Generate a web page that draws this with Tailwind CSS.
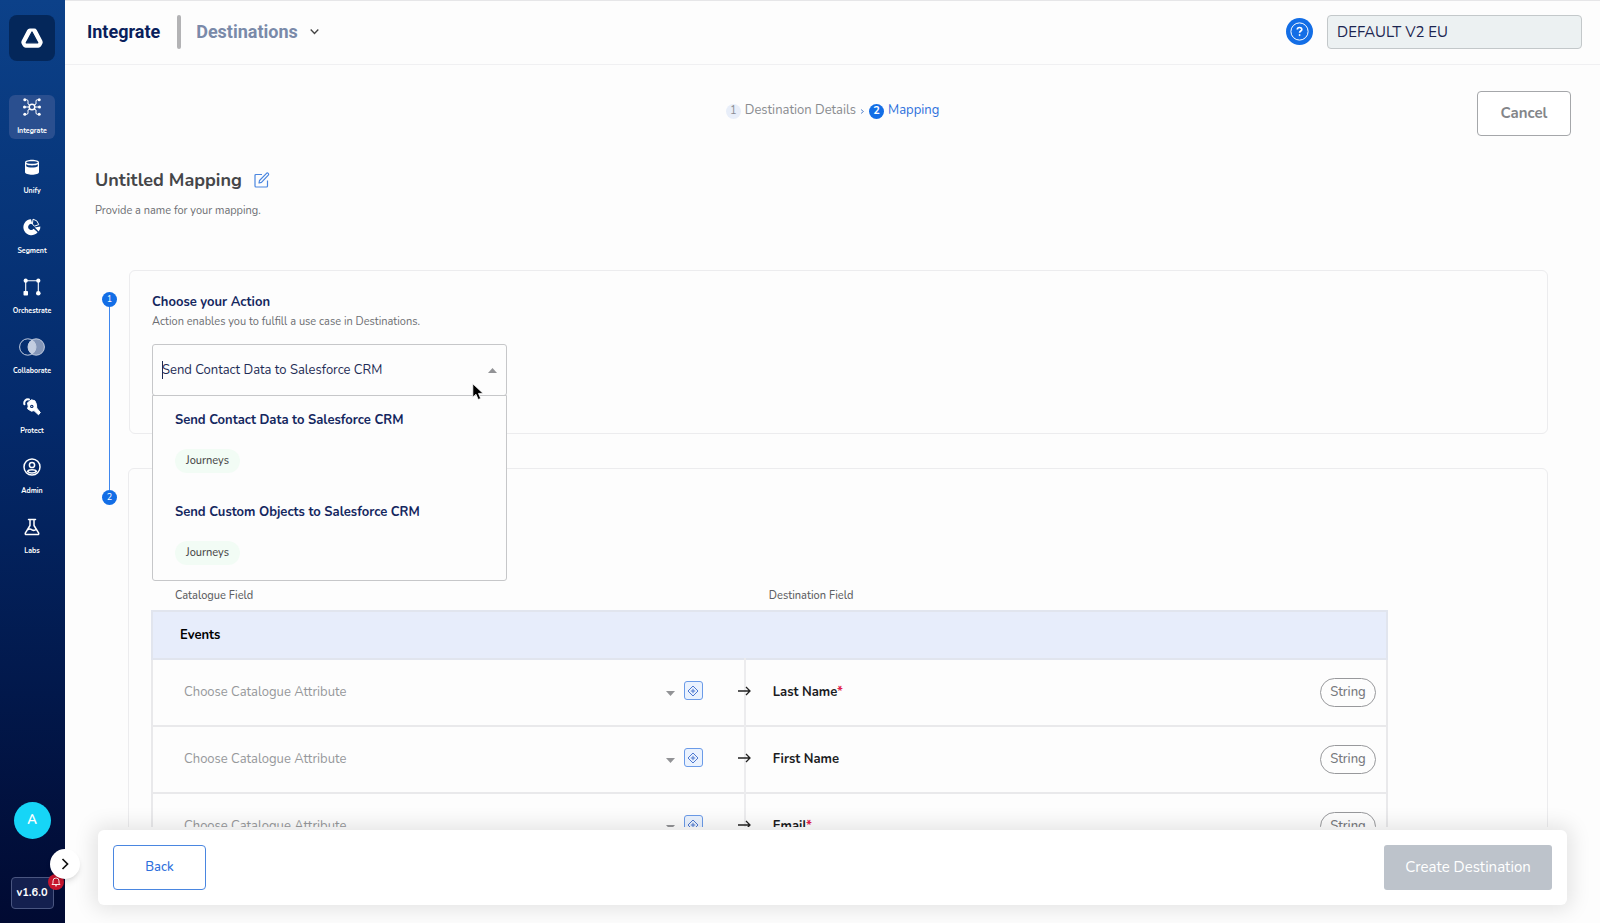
<!DOCTYPE html>
<html lang="en">
<head>
    <meta charset="UTF-8">
    <meta name="viewport" content="width=device-width, initial-scale=1.0">
    <title>Integrate - Destinations</title>
    <script src="https://cdn.jsdelivr.net/npm/@tailwindcss/browser@4"></script>
</head>
<body class="flex h-screen overflow-hidden bg-[#fdfdfd] font-['Nunito','Lato',sans-serif] text-[#4a4a4a]">

    <!-- Sidebar -->
    <aside class="relative z-20 flex w-[65px] shrink-0 flex-col items-center bg-linear-to-b from-[#0c4189] via-[#042a6b] via-45% to-[#010a32] pt-[15px] pr-px pb-[14px] text-white">
        <a href="#" aria-label="Home" class="mb-[34px] flex size-[46px] items-center justify-center rounded-lg bg-[#04275a]">
            <svg class="size-6" viewBox="0 0 24 24" fill="none">
                <path d="M9.800 3.200h4.400q1.300 0 1.900 1.100l5.600 10.700q.6 1.200 0 2.300l-1.400 2.500q-.7 1.100-2 1.100H5.700q-1.300 0-2-1.100l-1.400-2.500q-.6-1.100 0-2.300L7.900 4.300q.6-1.100 1.900-1.100Z" fill="white" stroke="white" stroke-width="1.500" stroke-linejoin="round"/>
                <path d="M12 6l5.800 10.800H6.200Z" fill="#04275a" stroke="#04275a" stroke-width="1.200" stroke-linejoin="round"/>
            </svg>
        </a>
        <nav class="flex flex-col gap-4 text-[7px] leading-[10px] font-bold">
            <a href="#" class="flex h-[44px] w-[46px] flex-col items-center gap-[10px] rounded-md bg-[#2a4f8f] pt-[3px]">
                <svg class="size-[18px]" viewBox="0 0 18 18" fill="none" stroke="white" stroke-width="1">
                    <circle cx="9" cy="9" r="2.8" stroke-width="1.5"/>
                    <path d="M1.5 9h4.7M11.8 9h4.7M2 1.700h1.600q1.400 0 1.400 1.400V6l2 1.200M2 16.300h1.600q1.400 0 1.400-1.400V12l2-1.200M16 1.700h-1.600q-1.400 0-1.400 1.400V6l-2 1.200M16 16.300h-1.600q-1.400 0-1.400-1.400V12l-2-1.200"/>
                    <g fill="white" stroke="none"><circle cx="1.8" cy="1.8" r="1.5"/><circle cx="1.5" cy="9" r="1.5"/><circle cx="1.8" cy="16.2" r="1.5"/><circle cx="16.2" cy="1.8" r="1.5"/><circle cx="16.5" cy="9" r="1.5"/><circle cx="16.2" cy="16.2" r="1.5"/></g>
                </svg>
                Integrate
            </a>
            <a href="#" class="flex h-[44px] w-[46px] flex-col items-center gap-[10px] pt-[3px]">
                <svg class="size-[18px]" viewBox="0 0 18 18">
                    <path d="M2 4.500C2 .9 16 .9 16 4.500V14c0 3.600-14 3.600-14 0Z" fill="white"/>
                    <path d="M3.200 4.500c0 1.700 11.600 1.700 11.600 0s-11.600-1.700-11.600 0M3.200 6.200v2c1.500 1.800 10.100 1.800 11.600 0v-2c-2 1.600-9.600 1.600-11.600 0" fill="#0a3a80"/>
                </svg>
                Unify
            </a>
            <a href="#" class="flex h-[44px] w-[46px] flex-col items-center gap-[10px] pt-[3px]">
                <svg class="size-[18px]" viewBox="0 0 18 18">
                    <path d="M8 1.200A8 8 0 1 0 14.600 14.200L10.600 10.800A3 3 0 1 1 9.400 6.200Z" fill="white"/>
                    <path d="M10 1.200a7 7 0 0 1 5.800 5.400l-4.400 1.600-2-2.200Z" fill="none" stroke="white" stroke-width="1"/>
                    <path d="M11.800 9.600l5.600-1.200q.2 3-1.800 5.200Z" fill="white"/>
                </svg>
                Segment
            </a>
            <a href="#" class="flex h-[44px] w-[46px] flex-col items-center gap-[10px] pt-[3px]">
                <svg class="size-[18px]" viewBox="0 0 18 18" fill="white">
                    <path d="M2.700 15V2.700h12.600V15" fill="none" stroke="white" stroke-width="1.1"/>
                    <circle cx="2.700" cy="2.700" r="2.100"/><circle cx="15.300" cy="2.700" r="2.100"/><rect x=".5" y="13" width="4.500" height="4.500" rx=".8"/><circle cx="15.300" cy="15.300" r="2.300"/>
                </svg>
                Orchestrate
            </a>
            <a href="#" class="flex h-[44px] w-[46px] flex-col items-center gap-[10px] pt-[3px]">
                <svg class="h-[18px] w-[26px]" viewBox="0 0 26 18">
                    <circle cx="17.2" cy="9" r="8.2" fill="#8496b8"/>
                    <path d="M13 2a8.200 8.200 0 0 1 0 14 8.200 8.200 0 0 1 0-14" fill="#c3cde0"/>
                    <circle cx="8.800" cy="9" r="8.200" fill="none" stroke="#c3cde0" stroke-width="1"/>
                    <circle cx="17.200" cy="9" r="8.200" fill="none" stroke="#c3cde0" stroke-width="1"/>
                </svg>
                Collaborate
            </a>
            <a href="#" class="flex h-[44px] w-[46px] flex-col items-center gap-[10px] pt-[3px]">
                <svg class="size-[18px]" viewBox="0 0 18 18">
                    <path d="M1.400 6.300C.6 3 3 .9 6 1.400" fill="none" stroke="white" stroke-width="2" stroke-linecap="round"/>
                    <path d="M4.500 4.800l4-3 3.400 1 1.600 3.600.2 3.600 3.600 4.500-1.800 2.300-4.500-4.200-2.600.6-3.800-2.400.6-2.400Z" fill="white" stroke="white" stroke-linejoin="round"/>
                    <circle cx="8.800" cy="8.400" r="1.700" fill="#05296a"/>
                    <circle cx="8.800" cy="8.400" r=".6" fill="white"/>
                </svg>
                Protect
            </a>
            <a href="#" class="flex h-[44px] w-[46px] flex-col items-center gap-[10px] pt-[3px]">
                <svg class="size-[18px]" viewBox="0 0 18 18" fill="none" stroke="white" stroke-width="1.5">
                    <circle cx="9" cy="9" r="8"/><circle cx="9" cy="7" r="2.600"/><path d="M4.600 13.500c.8-2.400 8-2.400 8.800 0-2 2-6.800 2-8.800 0Z"/>
                </svg>
                Admin
            </a>
            <a href="#" class="flex h-[44px] w-[46px] flex-col items-center gap-[10px] pt-[3px]">
                <svg class="size-[18px]" viewBox="0 0 18 18" fill="none" stroke="white" stroke-width="1.500" stroke-linecap="round" stroke-linejoin="round">
                    <path d="M5.500 1.500h7M7 1.500v6L2.300 15.200q-.3 1.300 1 1.300h11.400q1.300 0 1-1.300L11 7.500v-6M5 11.500q2-1 4 .3t4-.3"/>
                </svg>
                Labs
            </a>
        </nav>
        <div class="mt-auto mb-[38px] flex size-[37px] items-center justify-center rounded-full bg-[#16d5f7] text-[13px] font-bold">A</div>
        <button class="relative flex h-8 w-[43px] items-center justify-center rounded-sm border border-[#4a5680] bg-[#14204f] text-[11px] font-bold">
            v1.6.0
            <span class="absolute -top-[4px] -right-[11px] flex size-4 items-center justify-center rounded-full bg-[#c8152e]">
                <svg class="size-[10px]" viewBox="0 0 10 10" fill="none" stroke="white" stroke-width=".9"><path d="M1 7.500h8L8 6.200V4a3 3 0 0 0-6 0v2.200ZM4 8.800h2"/></svg>
            </span>
        </button>
        <button aria-label="Expand menu" class="absolute right-[-15px] bottom-[44px] flex size-[30px] items-center justify-center rounded-full bg-white shadow-md">
            <svg class="size-3" viewBox="0 0 12 12" fill="none" stroke="#111" stroke-width="1.7"><path d="M3.500 1l5 5-5 5"/></svg>
        </button>
    </aside>

    <div class="flex min-w-0 flex-1 flex-col">
        <header class="flex h-[65px] shrink-0 items-center border-t border-b border-t-[#e6e6e8] border-b-[#f0f0f2] pr-[18px] pb-[2px] pl-[22px]">
            <h1 class="font-['Roboto',sans-serif] text-lg font-bold text-[#0a1f5c]">Integrate</h1>
            <span class="mr-[15px] ml-[17px] h-[34px] w-1 rounded-full bg-[#b3b3b5]"></span>
            <button class="flex items-center gap-3 font-['Roboto',sans-serif] text-lg font-bold text-[#7a8aa9]">
                Destinations
                <svg class="size-[9px]" viewBox="0 0 9 9" fill="none" stroke="#444" stroke-width="1.300"><path d="M.7 2.500l3.800 4 3.800-4"/></svg>
            </button>
            <button aria-label="Help" class="ml-auto flex size-[27px] items-center justify-center rounded-full bg-[#136ee6]">
                <svg class="size-[19px]" viewBox="0 0 19 19" fill="none" stroke="white"><circle cx="9.500" cy="9.500" r="8.600"/><path d="M7.300 7.600c0-2.800 4.500-2.700 4.500-.2 0 1.700-2.200 1.600-2.200 3.400" stroke-width="1.700"/><circle cx="9.600" cy="13" r=".6" fill="white"/></svg>
            </button>
            <input type="text" aria-label="Workspace" value="DEFAULT V2 EU" readonly class="ml-[14px] h-[34px] w-[255px] rounded-sm border border-[#c3c8ca] bg-[#ecf1f2] px-[9px] text-[15px] text-[#1b2550] outline-none">
        </header>

        <main class="min-h-0 flex-1 overflow-hidden pt-[26px]">
            <div class="grid grid-cols-[1fr_auto_1fr] items-start px-[29px]">
                <ol class="col-start-2 flex h-10 items-center text-[13px] text-[#8a8c90]">
                    <li class="flex items-center gap-1"><span class="flex size-[15px] items-center justify-center rounded-full bg-[#e8eef9] text-[11px]">1</span>Destination Details</li>
                    <li aria-hidden="true" class="mx-1"><svg class="size-[5px]" viewBox="0 0 5 5" fill="none" stroke="#5a86cc"><path d="M1 .5l2.500 2L1 4.500"/></svg></li>
                    <li class="flex items-center gap-1 text-[#2e70dc]"><span class="flex size-[15px] items-center justify-center rounded-full bg-[#136ee6] text-[11px] font-bold text-white">2</span>Mapping</li>
                </ol>
                <button class="h-[45px] w-[94px] justify-self-end rounded-sm border border-[#a5a7aa] bg-white text-[15px] font-bold text-[#838589]">Cancel</button>
            </div>

            <div class="pr-[52px] pl-[30px]">
                <div class="mt-[29px] flex h-[30px] items-center gap-3">
                    <h2 class="text-lg font-bold text-[#454649]">Untitled Mapping</h2>
                    <button aria-label="Edit name">
                        <svg class="size-4" viewBox="0 0 16 16" fill="none" stroke="#4a86e0" stroke-width="1.200" stroke-linejoin="round"><path d="M8 2.500H2q-1 0-1 1V14q0 1 1 1h10.500q1 0 1-1V8.500M5.500 8.500L12.500 1.300q.9-.7 1.700.1t.1 1.700L7.500 10.300 5 11Z"/></svg>
                    </button>
                </div>
                <p class="mt-2 text-[11px] leading-4 text-[#6c6e72]">Provide a name for your mapping.</p>

                <!-- Step 1 -->
                <section class="mt-[51px] flex gap-3 pl-[7px]">
                    <div class="flex w-[15px] shrink-0 flex-col items-center pt-[22px]">
                        <span class="flex size-[15px] items-center justify-center rounded-full bg-[#136ee6] text-[9px] text-white">1</span>
                        <span class="w-px flex-1 bg-[#3f87ee]"></span>
                    </div>
                    <div class="mb-[34px] h-[164px] flex-1 rounded-md border border-[#ececee] px-[22px] pt-[21px]">
                        <h3 class="text-[13px] leading-5 font-bold text-[#14275f]">Choose your Action</h3>
                        <p class="text-[11px] leading-5 text-[#6c6e72]">Action enables you to fulfill a use case in Destinations.</p>
                        <div class="relative z-10 mt-3 w-[355px] rounded-[3px] border border-[#c6c7c9] bg-[#fdfdfd]">
                            <input type="text" role="combobox" aria-label="Action" aria-expanded="true" aria-controls="actions" value="Send Contact Data to Salesforce CRM" class="block h-[50px] w-full bg-transparent pr-10 pl-[9px] text-[13px] text-[#1d2c55] outline-none">
                            <span class="absolute top-4 left-[9px] h-[18px] w-px bg-[#1d2c55]"></span>
                            <svg class="absolute top-[23px] right-[9px] h-[5px] w-[9px]" viewBox="0 0 9 5" fill="#929396"><path d="M0 5L4.500 0 9 5Z"/></svg>
                            <ul id="actions" role="listbox" class="absolute top-full -right-px -left-px rounded-b-[3px] border border-[#c6c7c9] bg-[#fdfdfd] pb-[8px]">
                                <li role="option" aria-selected="true" class="h-[88px] px-[22px] pt-[14px]">
                                    <p class="text-[13px] leading-5 font-bold text-[#14275f]">Send Contact Data to Salesforce CRM</p>
                                    <span class="mt-[19px] inline-block rounded-full bg-[#f2fcf5] px-[11px] text-[11px] leading-6 font-medium">Journeys</span>
                                </li>
                                <li role="option" aria-selected="false" class="h-[88px] px-[22px] pt-[18px]">
                                    <p class="text-[13px] leading-5 font-bold text-[#14275f]">Send Custom Objects to Salesforce CRM</p>
                                    <span class="mt-[19px] inline-block rounded-full bg-[#f2fcf5] px-[11px] text-[11px] leading-6 font-medium">Journeys</span>
                                </li>
                            </ul>
                            <!-- Mouse pointer -->
                            <svg class="absolute top-[38px] left-[319px] z-10 h-[18px] w-3" viewBox="0 0 12 18"><path d="M.8.800V14.200L4 11.300l2.200 5.200 2.500-1-2.200-5.100h4.600Z" fill="black" stroke="white" stroke-width=".8"/></svg>
                        </div>
                    </div>
                </section>

                <!-- Step 2 -->
                <section class="flex gap-[11px] pl-[7px]">
                    <div class="flex w-[15px] shrink-0 flex-col items-center">
                        <span class="h-[22px] w-px bg-[#3f87ee]"></span>
                        <span class="flex size-[15px] items-center justify-center rounded-full bg-[#136ee6] text-[9px] text-white">2</span>
                    </div>
                    <div class="flex-1 rounded-md border border-[#ececee] pt-[114px] pr-[159px] pb-10 pl-[22px]">
                        <table class="w-full table-fixed border-collapse text-left text-[13px]">
                            <colgroup><col class="w-[48%]"><col></colgroup>
                            <thead>
                                <tr class="h-7 text-[11px] text-[#5d5f63]">
                                    <th class="pl-[23px] font-medium">Catalogue Field</th>
                                    <th class="pl-6 font-medium">Destination Field</th>
                                </tr>
                            </thead>
                            <tbody id="rows">
                                <tr class="h-12 border-2 border-[#e1e5ee] bg-[#e7edfb]">
                                    <th colspan="2" class="pt-px pl-[27px] font-bold text-black">Events</th>
                                </tr>
                            </tbody>
                        </table>
                    </div>
                </section>
            </div>
        </main>

        <footer class="relative z-10 mt-[3px] mr-[33px] mb-[18px] ml-[33px] flex h-[75px] shrink-0 items-center justify-between rounded-md bg-white px-[15px] shadow-[0_0_20px_5px_rgba(0,0,0,0.1)]">
            <button class="h-[45px] w-[93px] rounded-sm border border-[#4a86e0] text-[13px] font-medium text-[#2e70dc]">Back</button>
            <button disabled class="h-[45px] w-[168px] rounded-[3px] bg-[#bdc3cb] text-[15px] text-white">Create Destination</button>
        </footer>
    </div>

    <script>
        const fields = [
            { name: 'Last Name', required: true, type: 'String' },
            { name: 'First Name', required: false, type: 'String' },
            { name: 'Email', required: true, type: 'String' },
        ];

        const rows = document.getElementById('rows');
        fields.forEach((field) => {
            rows.insertAdjacentHTML('beforeend', `
                <tr class="h-[67px] border-2 border-[#e9e9eb]">
                    <td class="border-r-2 border-[#ececee] pl-[31px]">
                        <div class="flex items-center pr-[41px]">
                            <div class="relative flex-1">
                                <select aria-label="Catalogue attribute for ${field.name}" class="h-10 w-full appearance-none bg-transparent text-[13px] text-[#96989b]">
                                    <option>Choose Catalogue Attribute</option>
                                </select>
                                <svg class="pointer-events-none absolute top-[18px] right-[9px] h-[5px] w-[9px]" viewBox="0 0 9 5" fill="#929396"><path d="M0 0L4.500 5 9 0Z"/></svg>
                            </div>
                            <button aria-label="Add value" class="mb-1 flex size-[19px] items-center justify-center rounded-[3px] border border-[#6b9be8] bg-[#eaf2fe]">
                                <svg class="size-3" viewBox="0 0 12 12" fill="none" stroke="#4d78d0"><path d="M6 1l5 5-5 5-5-5ZM6 3.800v4.400M3.800 6h4.400"/></svg>
                            </button>
                        </div>
                    </td>
                    <td class="pr-[10px]">
                        <div class="-ml-2 flex items-center">
                            <svg class="mr-[22px] mb-1 h-[10px] w-[13px]" viewBox="0 0 13 10" fill="none" stroke="#222" stroke-width="1.300"><path d="M0 5h12M8 1l4 4-4 4"/></svg>
                            <span class="text-[13px] font-bold text-[#1b1c1f]">${field.name}${field.required ? '<span class="text-[#e0214d]">*</span>' : ''}</span>
                            <span class="ml-auto flex h-[29px] w-14 items-center justify-center rounded-full border border-[#98999c] text-[13px] font-medium text-[#77797d]">${field.type}</span>
                        </div>
                    </td>
                </tr>`);
        });
    </script>
</body>
</html>
